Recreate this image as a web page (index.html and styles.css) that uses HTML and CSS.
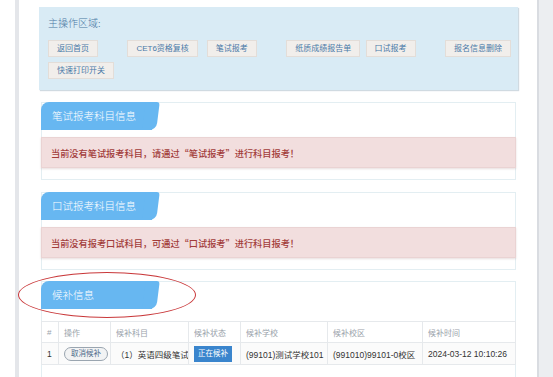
FILE: index.html
```html
<!DOCTYPE html>
<html>
<head>
    <title>报考信息</title>
    <link rel="stylesheet" href="styles.css">
</head>
<body>
    <div class="gutter"></div>
    <div class="strip"></div>
    <div class="content">
        <div class="ops">
            <div class="ops-title">主操作区域:</div>
            <div class="ops-grid">
                <div><span class="op-btn">返回首页</span></div>
                <div><span class="op-btn">CET6资格复核</span></div>
                <div><span class="op-btn">笔试报考</span></div>
                <div><span class="op-btn">纸质成绩报告单</span></div>
                <div><span class="op-btn">口试报考</span></div>
                <div><span class="op-btn">报名信息删除</span></div>
                <div><span class="op-btn">快速打印开关</span></div>
            </div>
        </div>

        <div class="box">
            <div class="tab">笔试报考科目信息</div>
            <div class="alert">当前没有笔试报考科目，请通过“笔试报考”进行科目报考！</div>
        </div>

        <div class="box">
            <div class="tab">口试报考科目信息</div>
            <div class="alert">当前没有报考口试科目，可通过“口试报考”进行科目报考！</div>
        </div>

        <div class="box last">
            <div class="mark"></div>
            <div class="tab">候补信息</div>
            <table class="list">
                <colgroup>
                    <col style="width: 17px">
                    <col style="width: 52px">
                    <col style="width: 78px">
                    <col style="width: 52px">
                    <col style="width: 87px">
                    <col style="width: 95px">
                    <col>
                </colgroup>
                <thead>
                    <tr>
                        <th>#</th>
                        <th>操作</th>
                        <th>候补科目</th>
                        <th>候补状态</th>
                        <th>候补学校</th>
                        <th>候补校区</th>
                        <th>候补时间</th>
                    </tr>
                </thead>
                <tbody>
                    <tr>
                        <td>1</td>
                        <td><span class="pill">取消候补</span></td>
                        <td>（1）英语四级笔试</td>
                        <td><span class="badge">正在候补</span></td>
                        <td>(99101)测试学校101</td>
                        <td>(991010)99101-0校区</td>
                        <td>2024-03-12 10:10:26</td>
                    </tr>
                </tbody>
            </table>
        </div>
    </div>
    <div class="rail"></div>
</body>
</html>
```

FILE: styles.css
```css
html, body {
    margin: 0;
    height: 377px;
    overflow: hidden;
}
body {
    display: flex;
    background: #fff;
    font-family: "Liberation Sans", "Noto Sans CJK SC", sans-serif;
    color: #333;
}
.gutter {
    width: 15px;
    flex: none;
}
.strip {
    width: 4px;
    flex: none;
    background: #e4e6ea;
}
.content {
    flex: 1;
    padding: 7px 19px 0 20px;
    min-width: 0;
}
.rail {
    width: 14px;
    flex: none;
    background: #eceef1;
    border-left: 2px solid #d9dce1;
}

.ops {
    background: #d9ebf5;
    padding: 10px 0 11px 9px;
    box-shadow: 1px 1px 1px rgba(120, 150, 170, 0.35);
}
.ops-title {
    font-family: "Noto Sans CJK SC", sans-serif;
    font-weight: 300;
    font-size: 10px;
    line-height: 12px;
    color: #4a78a4;
    margin-bottom: 11px;
}
.ops-grid {
    display: grid;
    grid-template-columns: repeat(6, 79.4px);
    row-gap: 5px;
}
.ops-grid > div {
    display: flex;
}
.op-btn {
    height: 15px;
    line-height: 15px;
    padding: 0 8px;
    font-size: 8px;
    color: #4a7aa8;
    background: #f1eeeb;
    border: 1px solid #e3ddd8;
}

.box {
    margin: 12px 2px 0;
    border: 1px solid #e3eef2;
    padding-bottom: 11px;
}
.box.last {
    position: relative;
    margin-top: 11px;
    padding-bottom: 20px;
}
.tab {
    position: relative;
    width: 100px;
    height: 28px;
    line-height: 28px;
    margin: -1px 0 0 -1px;
    padding-left: 11px;
    font-family: "Noto Sans CJK SC", sans-serif;
    font-weight: 300;
    font-size: 10.5px;
    color: #fff;
    background: #67b7f1;
    border-top-left-radius: 8px;
}
.tab::after {
    content: "";
    position: absolute;
    top: 0;
    right: -6px;
    width: 14px;
    height: 28px;
    background: #67b7f1;
    border-radius: 0 3px 7px 0;
    transform: skewX(-7deg);
}
.alert {
    margin: 7px -1px 0;
    height: 31px;
    line-height: 31px;
    padding-left: 9px;
    background: #f2dede;
    border: 1px solid #ead3d3;
    box-sizing: border-box;
    box-shadow: 0 1px 2px rgba(160, 120, 120, 0.25);
    color: #a23c3a;
    font-family: "Noto Sans CJK SC", sans-serif;
    font-size: 9.2px;
    font-weight: 500;
}

.mark {
    position: absolute;
    left: -24px;
    top: -10px;
    width: 176px;
    height: 44px;
    border: 1.5px solid #c9383a;
    border-radius: 50%;
    z-index: 2;
}
.list {
    width: calc(100% + 2px);
    margin: 12px -1px 0;
    border-collapse: collapse;
    table-layout: fixed;
    font-size: 8.5px;
}
.list th, .list td {
    border: 1px solid #e6e9ec;
    padding: 0 5px;
    text-align: left;
    white-space: nowrap;
    overflow: hidden;
}
.list th {
    height: 20px;
    font-weight: normal;
    color: #9aa3ab;
    font-size: 8px;
}
.list td {
    height: 21px;
    color: #333;
    background: #fbfbfb;
}
.pill {
    display: inline-block;
    height: 12px;
    line-height: 12px;
    padding: 0 6px;
    border: 1px solid #9aa5b0;
    border-radius: 7px;
    background: #f2f3f4;
    color: #4d6a88;
    font-size: 7.5px;
}
.badge {
    display: inline-block;
    height: 16px;
    line-height: 16px;
    padding: 0 4px;
    background: #3a85cd;
    color: #fff;
    font-size: 7.5px;
}
```
